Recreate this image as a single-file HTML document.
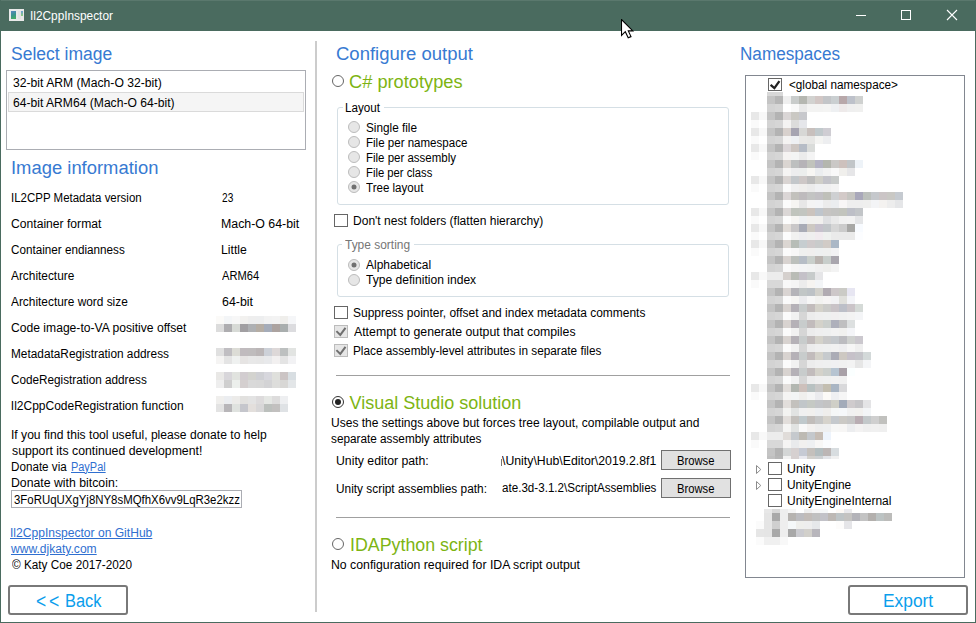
<!DOCTYPE html>
<html><head><meta charset="utf-8"><style>
html,body{margin:0;padding:0;}
body{width:976px;height:623px;overflow:hidden;position:relative;background:#fff;font-family:"Liberation Sans", sans-serif;}
.t{position:absolute;white-space:pre;transform-origin:0 0;}
i{position:absolute;display:block;}
</style></head><body>
<div style='position:absolute;left:0px;top:0px;width:976px;height:31px;background:#4a6b5f'></div><div style='position:absolute;left:0px;top:0px;width:976px;height:1px;background:#5a786d'></div><div style='position:absolute;left:0px;top:0px;width:1px;height:623px;background:#4a6b5f'></div><div style='position:absolute;left:975px;top:0px;width:1px;height:623px;background:#4a6b5f'></div><div style='position:absolute;left:0px;top:622px;width:976px;height:1px;background:#4a6b5f'></div><div style='position:absolute;left:9px;top:9px;width:15px;height:12px;background:#e9e9e9;'></div><div style='position:absolute;left:11px;top:11px;width:5px;height:8px;background:linear-gradient(160deg,#5b86c2,#3a948c 50%,#48b05a)'></div><div style='position:absolute;left:18px;top:11px;width:3px;height:8px;background:#e2e2e2'></div><div style='position:absolute;left:21px;top:11px;width:2px;height:5px;background:linear-gradient(#6a9fd8,#8ccf7a)'></div><div style='position:absolute;left:856px;top:15px;width:10px;height:1px;background:#fff'></div><div style='position:absolute;left:901px;top:10px;width:10px;height:10px;border:1px solid #fff;box-sizing:border-box'></div><svg style='position:absolute;left:946px;top:9px' width='12' height='12'><path d='M1 1 L11 11 M11 1 L1 11' stroke='#fff' stroke-width='1.1'/></svg><div style='position:absolute;left:6px;top:70px;width:300px;height:80px;border:1px solid #abadb3;box-sizing:border-box'></div><div style='position:absolute;left:8px;top:92px;width:296px;height:20px;background:#f5f5f5;border:1px solid #dadada;box-sizing:border-box'></div><div style='position:absolute;left:315px;top:41px;width:2px;height:571px;background:#cccccc'></div><div style='position:absolute;left:11px;top:490px;width:231px;height:18px;border:1px solid #abadb3;box-sizing:border-box'></div><div style='position:absolute;left:8px;top:585px;width:120px;height:30px;border:2px solid #797979;border-radius:3px;box-sizing:border-box'></div><div style='position:absolute;left:848px;top:585px;width:120px;height:30px;border:2px solid #797979;border-radius:3px;box-sizing:border-box'></div><svg style='position:absolute;left:331px;top:74px' width='14' height='14'><circle cx='7' cy='7' r='5.5' fill='#fff' stroke='#666' stroke-width='1'/></svg><svg style='position:absolute;left:331px;top:395px' width='14' height='14'><circle cx='7' cy='7' r='5.5' fill='#fff' stroke='#333' stroke-width='1'/><circle cx='7' cy='7' r='3' fill='#222'/></svg><svg style='position:absolute;left:331px;top:537px' width='14' height='14'><circle cx='7' cy='7' r='5.5' fill='#fff' stroke='#666' stroke-width='1'/></svg><svg style='position:absolute;left:347px;top:120px' width='14' height='14'><circle cx='7' cy='7' r='5.5' fill='#e6e6e6' stroke='#bcbcbc' stroke-width='1'/></svg><svg style='position:absolute;left:347px;top:135px' width='14' height='14'><circle cx='7' cy='7' r='5.5' fill='#e6e6e6' stroke='#bcbcbc' stroke-width='1'/></svg><svg style='position:absolute;left:347px;top:150px' width='14' height='14'><circle cx='7' cy='7' r='5.5' fill='#e6e6e6' stroke='#bcbcbc' stroke-width='1'/></svg><svg style='position:absolute;left:347px;top:165px' width='14' height='14'><circle cx='7' cy='7' r='5.5' fill='#e6e6e6' stroke='#bcbcbc' stroke-width='1'/></svg><svg style='position:absolute;left:347px;top:180px' width='14' height='14'><circle cx='7' cy='7' r='5.5' fill='#e6e6e6' stroke='#bcbcbc' stroke-width='1'/><circle cx='7' cy='7' r='2.5' fill='#707070'/></svg><svg style='position:absolute;left:347px;top:257.5px' width='14' height='14'><circle cx='7' cy='7' r='5.5' fill='#e6e6e6' stroke='#bcbcbc' stroke-width='1'/><circle cx='7' cy='7' r='2.5' fill='#707070'/></svg><svg style='position:absolute;left:347px;top:272.5px' width='14' height='14'><circle cx='7' cy='7' r='5.5' fill='#e6e6e6' stroke='#bcbcbc' stroke-width='1'/></svg><div style='position:absolute;left:337px;top:107px;width:392px;height:98px;border:1px solid #d5dfe5;border-radius:3px;box-sizing:border-box'></div><div style='position:absolute;left:342.5px;top:100px;width:41.5px;height:12px;background:#fff'></div><div style='position:absolute;left:337px;top:244px;width:392px;height:53px;border:1px solid #d5dfe5;border-radius:3px;box-sizing:border-box'></div><div style='position:absolute;left:342px;top:238px;width:72px;height:12px;background:#fff'></div><div style='position:absolute;left:334px;top:214px;width:14px;height:13px;border:1px solid #666;box-sizing:border-box;background:#fff'></div><div style='position:absolute;left:334px;top:306px;width:14px;height:13px;border:1px solid #666;box-sizing:border-box;background:#fff'></div><div style='position:absolute;left:334px;top:325px;width:14px;height:13px;border:1px solid #bcbcbc;box-sizing:border-box;background:#e6e6e6'></div><svg style='position:absolute;left:334px;top:325px' width='14' height='13'><path d='M2.4 6.1 L6.3 9.9 L11.5 2.8' fill='none' stroke='#707070' stroke-width='2'/></svg><div style='position:absolute;left:334px;top:344px;width:14px;height:13px;border:1px solid #bcbcbc;box-sizing:border-box;background:#e6e6e6'></div><svg style='position:absolute;left:334px;top:344px' width='14' height='13'><path d='M2.4 6.1 L6.3 9.9 L11.5 2.8' fill='none' stroke='#707070' stroke-width='2'/></svg><div style='position:absolute;left:336px;top:375px;width:394px;height:1px;background:#a0a0a0'></div><div style='position:absolute;left:336px;top:517px;width:394px;height:1px;background:#a0a0a0'></div><div style='position:absolute;left:661px;top:450px;width:70px;height:20px;background:#e1e1e1;border:1px solid #707070;box-sizing:border-box'></div><div style='position:absolute;left:661px;top:478px;width:70px;height:20px;background:#e1e1e1;border:1px solid #707070;box-sizing:border-box'></div><div style='position:absolute;left:501px;top:459px;width:1.4px;height:6.5px;background:#777'></div><div style='position:absolute;left:745px;top:75px;width:220px;height:503px;border:1px solid #828790;box-sizing:border-box'></div><div style='position:absolute;left:768px;top:78px;width:14px;height:13px;border:1px solid #666;box-sizing:border-box;background:#fff'></div><svg style='position:absolute;left:768px;top:78px' width='14' height='13'><path d='M2.6 6.9 L6.4 10.1 L11.4 3.2' fill='none' stroke='#222' stroke-width='2.3'/></svg><div style='position:absolute;left:768px;top:462px;width:14px;height:13px;border:1px solid #666;box-sizing:border-box;background:#fff'></div><div style='position:absolute;left:768px;top:478px;width:14px;height:13px;border:1px solid #666;box-sizing:border-box;background:#fff'></div><div style='position:absolute;left:768px;top:494px;width:14px;height:13px;border:1px solid #666;box-sizing:border-box;background:#fff'></div><svg style='position:absolute;left:755px;top:465px' width='8' height='10'><path d='M1.5 0.5 L1.5 8.5 L5.8 4.5 Z' fill='#fff' stroke='#8c8c8c' stroke-width='1'/></svg><svg style='position:absolute;left:755px;top:481px' width='8' height='10'><path d='M1.5 0.5 L1.5 8.5 L5.8 4.5 Z' fill='#fff' stroke='#8c8c8c' stroke-width='1'/></svg><svg style='position:absolute;left:621px;top:19px' width='14' height='21'><path d='M0.5 0.5 L0.5 16.5 L4.3 12.7 L7.2 18.8 L10 17.6 L7.3 11.9 L11.8 11.9 Z' fill='#fff' stroke='#000' stroke-width='1.1'/></svg>
<i style='left:216px;top:316px;width:8px;height:8px;background:#fbfaf8'></i><i style='left:224px;top:316px;width:8px;height:8px;background:#f3f5f7'></i><i style='left:232px;top:316px;width:8px;height:8px;background:#f7f7f7'></i><i style='left:240px;top:316px;width:8px;height:8px;background:#f2f1ef'></i><i style='left:248px;top:316px;width:8px;height:8px;background:#eeeeee'></i><i style='left:256px;top:316px;width:8px;height:8px;background:#edeeef'></i><i style='left:264px;top:316px;width:8px;height:8px;background:#f2f2f2'></i><i style='left:272px;top:316px;width:8px;height:8px;background:#f3f3f3'></i><i style='left:280px;top:316px;width:8px;height:8px;background:#efeeeb'></i><i style='left:288px;top:316px;width:8px;height:8px;background:#f5f6f8'></i><i style='left:216px;top:324px;width:8px;height:8px;background:#dcdcdc'></i><i style='left:224px;top:324px;width:8px;height:8px;background:#aeadb0'></i><i style='left:232px;top:324px;width:8px;height:8px;background:#d7dad6'></i><i style='left:240px;top:324px;width:8px;height:8px;background:#a19fa2'></i><i style='left:248px;top:324px;width:8px;height:8px;background:#aeb0b3'></i><i style='left:256px;top:324px;width:8px;height:8px;background:#b5ada4'></i><i style='left:264px;top:324px;width:8px;height:8px;background:#a5acb9'></i><i style='left:272px;top:324px;width:8px;height:8px;background:#aca3a0'></i><i style='left:280px;top:324px;width:8px;height:8px;background:#a9aeae'></i><i style='left:288px;top:324px;width:8px;height:8px;background:#dcdcdf'></i><i style='left:216px;top:348px;width:8px;height:8px;background:#e0e0e0'></i><i style='left:224px;top:348px;width:8px;height:8px;background:#c0bec2'></i><i style='left:232px;top:348px;width:8px;height:8px;background:#dcdcd6'></i><i style='left:240px;top:348px;width:8px;height:8px;background:#c0bbbe'></i><i style='left:248px;top:348px;width:8px;height:8px;background:#bfbcbd'></i><i style='left:256px;top:348px;width:8px;height:8px;background:#bbb6b7'></i><i style='left:264px;top:348px;width:8px;height:8px;background:#cdd1d8'></i><i style='left:272px;top:348px;width:8px;height:8px;background:#ddd8d8'></i><i style='left:280px;top:348px;width:8px;height:8px;background:#bdc0c0'></i><i style='left:288px;top:348px;width:8px;height:8px;background:#e2e4e2'></i><i style='left:216px;top:356px;width:8px;height:8px;background:#f5f4f3'></i><i style='left:224px;top:356px;width:8px;height:8px;background:#e4e4e4'></i><i style='left:232px;top:356px;width:8px;height:8px;background:#eff1f0'></i><i style='left:240px;top:356px;width:8px;height:8px;background:#e6e4e3'></i><i style='left:248px;top:356px;width:8px;height:8px;background:#e8e8e8'></i><i style='left:256px;top:356px;width:8px;height:8px;background:#e7e7e7'></i><i style='left:264px;top:356px;width:8px;height:8px;background:#e8e9eb'></i><i style='left:272px;top:356px;width:8px;height:8px;background:#f2f0f0'></i><i style='left:280px;top:356px;width:8px;height:8px;background:#e4e4e4'></i><i style='left:288px;top:356px;width:8px;height:8px;background:#f2f2f4'></i><i style='left:216px;top:372px;width:8px;height:8px;background:#e9e8e6'></i><i style='left:224px;top:372px;width:8px;height:8px;background:#d8d6da'></i><i style='left:232px;top:372px;width:8px;height:8px;background:#e1e3df'></i><i style='left:240px;top:372px;width:8px;height:8px;background:#d2cdd0'></i><i style='left:248px;top:372px;width:8px;height:8px;background:#d3d3cf'></i><i style='left:256px;top:372px;width:8px;height:8px;background:#cfd0d4'></i><i style='left:264px;top:372px;width:8px;height:8px;background:#d7d7dd'></i><i style='left:272px;top:372px;width:8px;height:8px;background:#dfe0dc'></i><i style='left:280px;top:372px;width:8px;height:8px;background:#cbc4c4'></i><i style='left:288px;top:372px;width:8px;height:8px;background:#d8dee2'></i><i style='left:216px;top:380px;width:8px;height:8px;background:#eeeeee'></i><i style='left:224px;top:380px;width:8px;height:8px;background:#cfcfcf'></i><i style='left:232px;top:380px;width:8px;height:8px;background:#ecefec'></i><i style='left:240px;top:380px;width:8px;height:8px;background:#d4cfcf'></i><i style='left:248px;top:380px;width:8px;height:8px;background:#d9d9d9'></i><i style='left:256px;top:380px;width:8px;height:8px;background:#d8d8d8'></i><i style='left:264px;top:380px;width:8px;height:8px;background:#d3d3d5'></i><i style='left:272px;top:380px;width:8px;height:8px;background:#dddddb'></i><i style='left:280px;top:380px;width:8px;height:8px;background:#d8d7d5'></i><i style='left:288px;top:380px;width:8px;height:8px;background:#e3e6e8'></i><i style='left:216px;top:396px;width:8px;height:8px;background:#f0efed'></i><i style='left:224px;top:396px;width:8px;height:8px;background:#ebedf0'></i><i style='left:232px;top:396px;width:8px;height:8px;background:#ecebe9'></i><i style='left:240px;top:396px;width:8px;height:8px;background:#e2e1df'></i><i style='left:248px;top:396px;width:8px;height:8px;background:#e3e3e3'></i><i style='left:256px;top:396px;width:8px;height:8px;background:#dddbdc'></i><i style='left:264px;top:396px;width:8px;height:8px;background:#e5e7e4'></i><i style='left:272px;top:396px;width:8px;height:8px;background:#dddcdc'></i><i style='left:280px;top:396px;width:8px;height:8px;background:#eeeff1'></i><i style='left:216px;top:404px;width:8px;height:8px;background:#e3e3e3'></i><i style='left:224px;top:404px;width:8px;height:8px;background:#b8b6b9'></i><i style='left:232px;top:404px;width:8px;height:8px;background:#dfe2df'></i><i style='left:240px;top:404px;width:8px;height:8px;background:#c5c6cc'></i><i style='left:248px;top:404px;width:8px;height:8px;background:#e3dfdc'></i><i style='left:256px;top:404px;width:8px;height:8px;background:#d8d7d8'></i><i style='left:264px;top:404px;width:8px;height:8px;background:#bcc0bd'></i><i style='left:272px;top:404px;width:8px;height:8px;background:#c2c0bf'></i><i style='left:280px;top:404px;width:8px;height:8px;background:#dfe2e5'></i><i style='left:767px;top:92px;width:16px;height:4px;background:#d8d8d8'></i><i style='left:767px;top:96px;width:8px;height:8px;background:#c4c4c4'></i><i style='left:767px;top:104px;width:8px;height:8px;background:#d3d3d3'></i><i style='left:775px;top:96px;width:8px;height:8px;background:#b6b6b6'></i><i style='left:775px;top:104px;width:8px;height:8px;background:#d6d6d6'></i><i style='left:783px;top:96px;width:8px;height:8px;background:#efefef'></i><i style='left:783px;top:104px;width:8px;height:8px;background:#ffffff'></i><i style='left:791px;top:96px;width:8px;height:8px;background:#c9cccb'></i><i style='left:791px;top:104px;width:8px;height:8px;background:#f9f9f9'></i><i style='left:799px;top:96px;width:8px;height:8px;background:#b5b7b1'></i><i style='left:799px;top:104px;width:8px;height:8px;background:#e9e9e9'></i><i style='left:807px;top:96px;width:8px;height:8px;background:#d2d2d0'></i><i style='left:807px;top:104px;width:8px;height:8px;background:#f3f3f2'></i><i style='left:815px;top:96px;width:8px;height:8px;background:#d2c7c5'></i><i style='left:815px;top:104px;width:8px;height:8px;background:#f3f3f2'></i><i style='left:823px;top:96px;width:8px;height:8px;background:#c3c5c8'></i><i style='left:823px;top:104px;width:8px;height:8px;background:#f4f4f3'></i><i style='left:831px;top:96px;width:8px;height:8px;background:#cacfd1'></i><i style='left:831px;top:104px;width:8px;height:8px;background:#eef0f2'></i><i style='left:839px;top:96px;width:8px;height:8px;background:#b8a8aa'></i><i style='left:839px;top:104px;width:8px;height:8px;background:#eeeaea'></i><i style='left:847px;top:96px;width:8px;height:8px;background:#bdc1ca'></i><i style='left:847px;top:104px;width:8px;height:8px;background:#efefef'></i><i style='left:855px;top:96px;width:8px;height:8px;background:#cfd1d0'></i><i style='left:855px;top:104px;width:8px;height:8px;background:#f0f0ef'></i><i style='left:751px;top:112px;width:8px;height:8px;background:#e8e8e8'></i><i style='left:759px;top:112px;width:8px;height:8px;background:#f8f8f8'></i><i style='left:751px;top:120px;width:8px;height:8px;background:#fafafa'></i><i style='left:767px;top:112px;width:8px;height:8px;background:#c4c4c4'></i><i style='left:767px;top:120px;width:8px;height:8px;background:#d3d3d3'></i><i style='left:775px;top:112px;width:8px;height:8px;background:#b3b3b3'></i><i style='left:775px;top:120px;width:8px;height:8px;background:#d6d6d6'></i><i style='left:783px;top:112px;width:8px;height:8px;background:#dad6d6'></i><i style='left:783px;top:120px;width:8px;height:8px;background:#f4f3f2'></i><i style='left:791px;top:112px;width:8px;height:8px;background:#cac8c3'></i><i style='left:791px;top:120px;width:8px;height:8px;background:#dcdcdb'></i><i style='left:799px;top:112px;width:8px;height:8px;background:#c7c8cc'></i><i style='left:799px;top:120px;width:8px;height:8px;background:#e5e6ea'></i><i style='left:751px;top:128px;width:8px;height:8px;background:#e8e8e8'></i><i style='left:759px;top:128px;width:8px;height:8px;background:#f8f8f8'></i><i style='left:751px;top:136px;width:8px;height:8px;background:#fafafa'></i><i style='left:767px;top:128px;width:8px;height:8px;background:#c4c4c4'></i><i style='left:767px;top:136px;width:8px;height:8px;background:#d3d3d3'></i><i style='left:775px;top:128px;width:8px;height:8px;background:#b3b3b3'></i><i style='left:775px;top:136px;width:8px;height:8px;background:#d6d6d6'></i><i style='left:783px;top:128px;width:8px;height:8px;background:#d8d1cd'></i><i style='left:783px;top:136px;width:8px;height:8px;background:#f4f3f2'></i><i style='left:791px;top:128px;width:8px;height:8px;background:#a6a4b1'></i><i style='left:791px;top:136px;width:8px;height:8px;background:#eef0f3'></i><i style='left:799px;top:128px;width:8px;height:8px;background:#d7d7d5'></i><i style='left:799px;top:136px;width:8px;height:8px;background:#e9e8e6'></i><i style='left:807px;top:128px;width:8px;height:8px;background:#c8c0bd'></i><i style='left:807px;top:136px;width:8px;height:8px;background:#e7e7e5'></i><i style='left:815px;top:128px;width:8px;height:8px;background:#c1c9cc'></i><i style='left:815px;top:136px;width:8px;height:8px;background:#f4f4f2'></i><i style='left:823px;top:128px;width:8px;height:8px;background:#cfcdd3'></i><i style='left:823px;top:136px;width:8px;height:8px;background:#edeef0'></i><i style='left:751px;top:144px;width:8px;height:8px;background:#e8e8e8'></i><i style='left:759px;top:144px;width:8px;height:8px;background:#f8f8f8'></i><i style='left:751px;top:152px;width:8px;height:8px;background:#fafafa'></i><i style='left:767px;top:144px;width:8px;height:8px;background:#c4c4c4'></i><i style='left:767px;top:152px;width:8px;height:8px;background:#d3d3d3'></i><i style='left:775px;top:144px;width:8px;height:8px;background:#b3b3b3'></i><i style='left:775px;top:152px;width:8px;height:8px;background:#d6d6d6'></i><i style='left:783px;top:144px;width:8px;height:8px;background:#dbd6d8'></i><i style='left:783px;top:152px;width:8px;height:8px;background:#f5f3f2'></i><i style='left:791px;top:144px;width:8px;height:8px;background:#cdc6c2'></i><i style='left:791px;top:152px;width:8px;height:8px;background:#f3f4f4'></i><i style='left:799px;top:144px;width:8px;height:8px;background:#b6bcc6'></i><i style='left:799px;top:152px;width:8px;height:8px;background:#ebebeb'></i><i style='left:807px;top:144px;width:8px;height:8px;background:#dadcda'></i><i style='left:807px;top:152px;width:8px;height:8px;background:#f4f4f4'></i><i style='left:767px;top:160px;width:8px;height:8px;background:#c4c4c4'></i><i style='left:767px;top:168px;width:8px;height:8px;background:#d3d3d3'></i><i style='left:775px;top:160px;width:8px;height:8px;background:#b3b3b3'></i><i style='left:775px;top:168px;width:8px;height:8px;background:#d6d6d6'></i><i style='left:783px;top:160px;width:8px;height:8px;background:#dad5d1'></i><i style='left:783px;top:168px;width:8px;height:8px;background:#f5f4f3'></i><i style='left:791px;top:160px;width:8px;height:8px;background:#bdbfbf'></i><i style='left:791px;top:168px;width:8px;height:8px;background:#ededee'></i><i style='left:799px;top:160px;width:8px;height:8px;background:#b6b3b7'></i><i style='left:799px;top:168px;width:8px;height:8px;background:#eceeed'></i><i style='left:807px;top:160px;width:8px;height:8px;background:#c1c3bc'></i><i style='left:807px;top:168px;width:8px;height:8px;background:#f7f6f3'></i><i style='left:815px;top:160px;width:8px;height:8px;background:#b4b3c3'></i><i style='left:815px;top:168px;width:8px;height:8px;background:#ebedef'></i><i style='left:823px;top:160px;width:8px;height:8px;background:#b4b6ae'></i><i style='left:823px;top:168px;width:8px;height:8px;background:#f2f2f2'></i><i style='left:831px;top:160px;width:8px;height:8px;background:#cac8c6'></i><i style='left:831px;top:168px;width:8px;height:8px;background:#f9f9f9'></i><i style='left:839px;top:160px;width:8px;height:8px;background:#cdc1bd'></i><i style='left:839px;top:168px;width:8px;height:8px;background:#f0efec'></i><i style='left:847px;top:160px;width:8px;height:8px;background:#c1c5c8'></i><i style='left:847px;top:168px;width:8px;height:8px;background:#e6e6e8'></i><i style='left:855px;top:160px;width:8px;height:8px;background:#eef3f8'></i><i style='left:855px;top:168px;width:8px;height:8px;background:#ffffff'></i><i style='left:751px;top:176px;width:8px;height:8px;background:#e8e8e8'></i><i style='left:759px;top:176px;width:8px;height:8px;background:#f8f8f8'></i><i style='left:751px;top:184px;width:8px;height:8px;background:#fafafa'></i><i style='left:767px;top:176px;width:8px;height:8px;background:#c4c4c4'></i><i style='left:767px;top:184px;width:8px;height:8px;background:#d3d3d3'></i><i style='left:775px;top:176px;width:8px;height:8px;background:#b3b3b3'></i><i style='left:775px;top:184px;width:8px;height:8px;background:#d6d6d6'></i><i style='left:783px;top:176px;width:8px;height:8px;background:#d9d4d2'></i><i style='left:783px;top:184px;width:8px;height:8px;background:#fafafa'></i><i style='left:791px;top:176px;width:8px;height:8px;background:#c3c7ca'></i><i style='left:791px;top:184px;width:8px;height:8px;background:#f0f0f0'></i><i style='left:799px;top:176px;width:8px;height:8px;background:#cdc7c6'></i><i style='left:799px;top:184px;width:8px;height:8px;background:#efeeec'></i><i style='left:807px;top:176px;width:8px;height:8px;background:#bdbdbd'></i><i style='left:807px;top:184px;width:8px;height:8px;background:#ebebeb'></i><i style='left:815px;top:176px;width:8px;height:8px;background:#cfcec8'></i><i style='left:815px;top:184px;width:8px;height:8px;background:#eff0f2'></i><i style='left:823px;top:176px;width:8px;height:8px;background:#c3c3c9'></i><i style='left:823px;top:184px;width:8px;height:8px;background:#f0f0f0'></i><i style='left:831px;top:176px;width:8px;height:8px;background:#c8cbca'></i><i style='left:831px;top:184px;width:8px;height:8px;background:#f3f3f3'></i><i style='left:767px;top:192px;width:8px;height:8px;background:#c4c4c4'></i><i style='left:767px;top:200px;width:8px;height:8px;background:#d3d3d3'></i><i style='left:775px;top:192px;width:8px;height:8px;background:#b3b3b3'></i><i style='left:775px;top:200px;width:8px;height:8px;background:#d6d6d6'></i><i style='left:783px;top:192px;width:8px;height:8px;background:#dbd6d6'></i><i style='left:783px;top:200px;width:8px;height:8px;background:#fbfbfb'></i><i style='left:791px;top:192px;width:8px;height:8px;background:#c2c1bc'></i><i style='left:791px;top:200px;width:8px;height:8px;background:#f6f5f2'></i><i style='left:799px;top:192px;width:8px;height:8px;background:#bebbbd'></i><i style='left:799px;top:200px;width:8px;height:8px;background:#e7e7e7'></i><i style='left:807px;top:192px;width:8px;height:8px;background:#c3c4c3'></i><i style='left:807px;top:200px;width:8px;height:8px;background:#f4f4f4'></i><i style='left:815px;top:192px;width:8px;height:8px;background:#c2c0c4'></i><i style='left:815px;top:200px;width:8px;height:8px;background:#f3f4f6'></i><i style='left:823px;top:192px;width:8px;height:8px;background:#bfc0b9'></i><i style='left:823px;top:200px;width:8px;height:8px;background:#ececec'></i><i style='left:831px;top:192px;width:8px;height:8px;background:#ced0d2'></i><i style='left:831px;top:200px;width:8px;height:8px;background:#ebedef'></i><i style='left:839px;top:192px;width:8px;height:8px;background:#d3cac8'></i><i style='left:839px;top:200px;width:8px;height:8px;background:#f8f6f6'></i><i style='left:847px;top:192px;width:8px;height:8px;background:#c6c5c1'></i><i style='left:847px;top:200px;width:8px;height:8px;background:#eeeeee'></i><i style='left:855px;top:192px;width:8px;height:8px;background:#a9a8ba'></i><i style='left:855px;top:200px;width:8px;height:8px;background:#eeeeee'></i><i style='left:863px;top:192px;width:8px;height:8px;background:#bcc0bc'></i><i style='left:863px;top:200px;width:8px;height:8px;background:#efefee'></i><i style='left:871px;top:192px;width:8px;height:8px;background:#c5c8cc'></i><i style='left:871px;top:200px;width:8px;height:8px;background:#f3f4f6'></i><i style='left:879px;top:192px;width:8px;height:8px;background:#cbc5c6'></i><i style='left:879px;top:200px;width:8px;height:8px;background:#f4f2f0'></i><i style='left:887px;top:192px;width:8px;height:8px;background:#c9c8c4'></i><i style='left:887px;top:200px;width:8px;height:8px;background:#ededed'></i><i style='left:895px;top:192px;width:8px;height:8px;background:#c5cad0'></i><i style='left:895px;top:200px;width:8px;height:8px;background:#e5e6e8'></i><i style='left:751px;top:208px;width:8px;height:8px;background:#e8e8e8'></i><i style='left:759px;top:208px;width:8px;height:8px;background:#f8f8f8'></i><i style='left:751px;top:216px;width:8px;height:8px;background:#fafafa'></i><i style='left:767px;top:208px;width:8px;height:8px;background:#c4c4c4'></i><i style='left:767px;top:216px;width:8px;height:8px;background:#d3d3d3'></i><i style='left:775px;top:208px;width:8px;height:8px;background:#b3b3b3'></i><i style='left:775px;top:216px;width:8px;height:8px;background:#d6d6d6'></i><i style='left:783px;top:208px;width:8px;height:8px;background:#dbd7d6'></i><i style='left:783px;top:216px;width:8px;height:8px;background:#fcfcfc'></i><i style='left:791px;top:208px;width:8px;height:8px;background:#c0c4bd'></i><i style='left:791px;top:216px;width:8px;height:8px;background:#f6f5f3'></i><i style='left:799px;top:208px;width:8px;height:8px;background:#c2c5c0'></i><i style='left:799px;top:216px;width:8px;height:8px;background:#eef0f2'></i><i style='left:807px;top:208px;width:8px;height:8px;background:#cbc3bd'></i><i style='left:807px;top:216px;width:8px;height:8px;background:#f1f0ee'></i><i style='left:815px;top:208px;width:8px;height:8px;background:#bfc5cc'></i><i style='left:815px;top:216px;width:8px;height:8px;background:#f1f0ee'></i><i style='left:823px;top:208px;width:8px;height:8px;background:#c6c4c2'></i><i style='left:823px;top:216px;width:8px;height:8px;background:#dfe0e2'></i><i style='left:831px;top:208px;width:8px;height:8px;background:#c3c3c1'></i><i style='left:831px;top:216px;width:8px;height:8px;background:#e9e9e9'></i><i style='left:839px;top:208px;width:8px;height:8px;background:#c2c4bd'></i><i style='left:839px;top:216px;width:8px;height:8px;background:#f1f1f1'></i><i style='left:847px;top:208px;width:8px;height:8px;background:#bdbfc7'></i><i style='left:847px;top:216px;width:8px;height:8px;background:#f2f2f2'></i><i style='left:855px;top:208px;width:8px;height:8px;background:#c2c5c8'></i><i style='left:855px;top:216px;width:8px;height:8px;background:#e4e5e7'></i><i style='left:751px;top:224px;width:8px;height:8px;background:#e8e8e8'></i><i style='left:759px;top:224px;width:8px;height:8px;background:#f8f8f8'></i><i style='left:751px;top:232px;width:8px;height:8px;background:#fafafa'></i><i style='left:767px;top:224px;width:8px;height:8px;background:#c4c4c4'></i><i style='left:767px;top:232px;width:8px;height:8px;background:#d3d3d3'></i><i style='left:775px;top:224px;width:8px;height:8px;background:#b3b3b3'></i><i style='left:775px;top:232px;width:8px;height:8px;background:#d6d6d6'></i><i style='left:783px;top:224px;width:8px;height:8px;background:#e1dcd8'></i><i style='left:783px;top:232px;width:8px;height:8px;background:#fcfcfc'></i><i style='left:791px;top:224px;width:8px;height:8px;background:#c9c7c8'></i><i style='left:791px;top:232px;width:8px;height:8px;background:#f1f1f0'></i><i style='left:799px;top:224px;width:8px;height:8px;background:#a8abb6'></i><i style='left:799px;top:232px;width:8px;height:8px;background:#ededf0'></i><i style='left:807px;top:224px;width:8px;height:8px;background:#cdc8c2'></i><i style='left:807px;top:232px;width:8px;height:8px;background:#efefef'></i><i style='left:815px;top:224px;width:8px;height:8px;background:#c6c1cc'></i><i style='left:815px;top:232px;width:8px;height:8px;background:#f1ebef'></i><i style='left:823px;top:224px;width:8px;height:8px;background:#c2c6c9'></i><i style='left:823px;top:232px;width:8px;height:8px;background:#eff1ef'></i><i style='left:831px;top:224px;width:8px;height:8px;background:#d6d6d6'></i><i style='left:831px;top:232px;width:8px;height:8px;background:#eaeaea'></i><i style='left:839px;top:224px;width:8px;height:8px;background:#cbcbcb'></i><i style='left:839px;top:232px;width:8px;height:8px;background:#eaeaea'></i><i style='left:847px;top:224px;width:8px;height:8px;background:#a8a8a6'></i><i style='left:847px;top:232px;width:8px;height:8px;background:#eaeaea'></i><i style='left:855px;top:224px;width:8px;height:8px;background:#f8fbff'></i><i style='left:855px;top:232px;width:8px;height:8px;background:#fcfdff'></i><i style='left:751px;top:240px;width:8px;height:8px;background:#e8e8e8'></i><i style='left:759px;top:240px;width:8px;height:8px;background:#f8f8f8'></i><i style='left:751px;top:248px;width:8px;height:8px;background:#fafafa'></i><i style='left:767px;top:240px;width:8px;height:8px;background:#c4c4c4'></i><i style='left:767px;top:248px;width:8px;height:8px;background:#d3d3d3'></i><i style='left:775px;top:240px;width:8px;height:8px;background:#b3b3b3'></i><i style='left:775px;top:248px;width:8px;height:8px;background:#d6d6d6'></i><i style='left:783px;top:240px;width:8px;height:8px;background:#dbd6d2'></i><i style='left:783px;top:248px;width:8px;height:8px;background:#fbfbfb'></i><i style='left:791px;top:240px;width:8px;height:8px;background:#b7bdb7'></i><i style='left:791px;top:248px;width:8px;height:8px;background:#f7f7f7'></i><i style='left:799px;top:240px;width:8px;height:8px;background:#c6cdd0'></i><i style='left:799px;top:248px;width:8px;height:8px;background:#eff0ef'></i><i style='left:807px;top:240px;width:8px;height:8px;background:#cfcacb'></i><i style='left:807px;top:248px;width:8px;height:8px;background:#f0efee'></i><i style='left:815px;top:240px;width:8px;height:8px;background:#c9cbcb'></i><i style='left:815px;top:248px;width:8px;height:8px;background:#eef0f0'></i><i style='left:823px;top:240px;width:8px;height:8px;background:#d1cbc6'></i><i style='left:823px;top:248px;width:8px;height:8px;background:#eff0ef'></i><i style='left:831px;top:240px;width:8px;height:8px;background:#aab7c6'></i><i style='left:831px;top:248px;width:8px;height:8px;background:#f2f2f4'></i><i style='left:767px;top:256px;width:8px;height:8px;background:#c4c4c4'></i><i style='left:767px;top:264px;width:8px;height:8px;background:#d3d3d3'></i><i style='left:775px;top:256px;width:8px;height:8px;background:#b3b3b3'></i><i style='left:775px;top:264px;width:8px;height:8px;background:#d6d6d6'></i><i style='left:783px;top:256px;width:8px;height:8px;background:#d8d3d0'></i><i style='left:783px;top:264px;width:8px;height:8px;background:#fafafa'></i><i style='left:791px;top:256px;width:8px;height:8px;background:#bcc0bc'></i><i style='left:791px;top:264px;width:8px;height:8px;background:#f5f5f5'></i><i style='left:799px;top:256px;width:8px;height:8px;background:#b6bdc6'></i><i style='left:799px;top:264px;width:8px;height:8px;background:#f3f4f5'></i><i style='left:807px;top:256px;width:8px;height:8px;background:#c9cfcb'></i><i style='left:807px;top:264px;width:8px;height:8px;background:#f2f3f3'></i><i style='left:815px;top:256px;width:8px;height:8px;background:#bab4b0'></i><i style='left:815px;top:264px;width:8px;height:8px;background:#f0f0f0'></i><i style='left:823px;top:256px;width:8px;height:8px;background:#c8cecb'></i><i style='left:823px;top:264px;width:8px;height:8px;background:#efefed'></i><i style='left:831px;top:256px;width:8px;height:8px;background:#a9a6ae'></i><i style='left:831px;top:264px;width:8px;height:8px;background:#f3f3f3'></i><i style='left:751px;top:272px;width:8px;height:8px;background:#e8e8e8'></i><i style='left:759px;top:272px;width:8px;height:8px;background:#f8f8f8'></i><i style='left:751px;top:280px;width:8px;height:8px;background:#fafafa'></i><i style='left:767px;top:272px;width:8px;height:8px;background:#ececec'></i><i style='left:767px;top:280px;width:8px;height:8px;background:#d8d8d8'></i><i style='left:775px;top:272px;width:8px;height:8px;background:#ececec'></i><i style='left:775px;top:280px;width:8px;height:8px;background:#d8d8d8'></i><i style='left:783px;top:272px;width:8px;height:8px;background:#d5d0cd'></i><i style='left:783px;top:280px;width:8px;height:8px;background:#f8f8f8'></i><i style='left:791px;top:272px;width:8px;height:8px;background:#b9bcb6'></i><i style='left:791px;top:280px;width:8px;height:8px;background:#f5f5f5'></i><i style='left:799px;top:272px;width:8px;height:8px;background:#c4c1c8'></i><i style='left:799px;top:280px;width:8px;height:8px;background:#ececec'></i><i style='left:807px;top:272px;width:8px;height:8px;background:#c7cbcb'></i><i style='left:807px;top:280px;width:8px;height:8px;background:#f6f4f1'></i><i style='left:815px;top:272px;width:8px;height:8px;background:#e6e6e8'></i><i style='left:815px;top:280px;width:8px;height:8px;background:#f3f5f7'></i><i style='left:767px;top:288px;width:8px;height:8px;background:#c4c4c4'></i><i style='left:767px;top:296px;width:8px;height:8px;background:#d3d3d3'></i><i style='left:775px;top:288px;width:8px;height:8px;background:#b3b3b3'></i><i style='left:775px;top:296px;width:8px;height:8px;background:#d6d6d6'></i><i style='left:783px;top:288px;width:8px;height:8px;background:#d9d4d2'></i><i style='left:783px;top:296px;width:8px;height:8px;background:#fafafa'></i><i style='left:791px;top:288px;width:8px;height:8px;background:#b5b4b9'></i><i style='left:791px;top:296px;width:8px;height:8px;background:#f6f5f3'></i><i style='left:799px;top:288px;width:8px;height:8px;background:#c1c6c6'></i><i style='left:799px;top:296px;width:8px;height:8px;background:#ebebee'></i><i style='left:807px;top:288px;width:8px;height:8px;background:#bdc2c6'></i><i style='left:807px;top:296px;width:8px;height:8px;background:#f6f6f6'></i><i style='left:815px;top:288px;width:8px;height:8px;background:#d2d1cb'></i><i style='left:815px;top:296px;width:8px;height:8px;background:#f2f2f0'></i><i style='left:823px;top:288px;width:8px;height:8px;background:#b1abb2'></i><i style='left:823px;top:296px;width:8px;height:8px;background:#f6f4f4'></i><i style='left:831px;top:288px;width:8px;height:8px;background:#cdc7c9'></i><i style='left:831px;top:296px;width:8px;height:8px;background:#f2f2f4'></i><i style='left:839px;top:288px;width:8px;height:8px;background:#cbcbc6'></i><i style='left:839px;top:296px;width:8px;height:8px;background:#e0e0dc'></i><i style='left:847px;top:288px;width:8px;height:8px;background:#e7e6f2'></i><i style='left:847px;top:296px;width:8px;height:8px;background:#f3f4f8'></i><i style='left:767px;top:304px;width:8px;height:8px;background:#c4c4c4'></i><i style='left:767px;top:312px;width:8px;height:8px;background:#d3d3d3'></i><i style='left:775px;top:304px;width:8px;height:8px;background:#b3b3b3'></i><i style='left:775px;top:312px;width:8px;height:8px;background:#d6d6d6'></i><i style='left:783px;top:304px;width:8px;height:8px;background:#d8d3d0'></i><i style='left:783px;top:312px;width:8px;height:8px;background:#fbfbfb'></i><i style='left:791px;top:304px;width:8px;height:8px;background:#b5b1b7'></i><i style='left:791px;top:312px;width:8px;height:8px;background:#f1f1f1'></i><i style='left:799px;top:304px;width:8px;height:8px;background:#c8cccc'></i><i style='left:799px;top:312px;width:8px;height:8px;background:#d6d6d6'></i><i style='left:807px;top:304px;width:8px;height:8px;background:#c2bcbc'></i><i style='left:807px;top:312px;width:8px;height:8px;background:#ececec'></i><i style='left:815px;top:304px;width:8px;height:8px;background:#d4d2ca'></i><i style='left:815px;top:312px;width:8px;height:8px;background:#efefef'></i><i style='left:823px;top:304px;width:8px;height:8px;background:#cbcbc9'></i><i style='left:823px;top:312px;width:8px;height:8px;background:#eff0f0'></i><i style='left:831px;top:304px;width:8px;height:8px;background:#c9c3c7'></i><i style='left:831px;top:312px;width:8px;height:8px;background:#f1eff0'></i><i style='left:839px;top:304px;width:8px;height:8px;background:#bcbfc8'></i><i style='left:839px;top:312px;width:8px;height:8px;background:#f1f1f1'></i><i style='left:847px;top:304px;width:8px;height:8px;background:#cac4c8'></i><i style='left:847px;top:312px;width:8px;height:8px;background:#f3f3f3'></i><i style='left:855px;top:304px;width:8px;height:8px;background:#d5dad7'></i><i style='left:855px;top:312px;width:8px;height:8px;background:#f4f5f7'></i><i style='left:767px;top:320px;width:8px;height:8px;background:#c4c4c4'></i><i style='left:767px;top:328px;width:8px;height:8px;background:#d3d3d3'></i><i style='left:775px;top:320px;width:8px;height:8px;background:#b3b3b3'></i><i style='left:775px;top:328px;width:8px;height:8px;background:#d6d6d6'></i><i style='left:783px;top:320px;width:8px;height:8px;background:#d8d3d0'></i><i style='left:783px;top:328px;width:8px;height:8px;background:#fbfbfb'></i><i style='left:791px;top:320px;width:8px;height:8px;background:#b5b1b7'></i><i style='left:791px;top:328px;width:8px;height:8px;background:#f1f1f1'></i><i style='left:799px;top:320px;width:8px;height:8px;background:#c8cccc'></i><i style='left:799px;top:328px;width:8px;height:8px;background:#d6d6d6'></i><i style='left:807px;top:320px;width:8px;height:8px;background:#c2bcbc'></i><i style='left:807px;top:328px;width:8px;height:8px;background:#ececec'></i><i style='left:815px;top:320px;width:8px;height:8px;background:#d4d2ca'></i><i style='left:815px;top:328px;width:8px;height:8px;background:#efefef'></i><i style='left:823px;top:320px;width:8px;height:8px;background:#cbcfcc'></i><i style='left:823px;top:328px;width:8px;height:8px;background:#eff0f0'></i><i style='left:831px;top:320px;width:8px;height:8px;background:#aeb0bb'></i><i style='left:831px;top:328px;width:8px;height:8px;background:#f2f2f2'></i><i style='left:839px;top:320px;width:8px;height:8px;background:#bfbfc0'></i><i style='left:839px;top:328px;width:8px;height:8px;background:#f1f1ef'></i><i style='left:847px;top:320px;width:8px;height:8px;background:#dde0e0'></i><i style='left:847px;top:328px;width:8px;height:8px;background:#f4f5f8'></i><i style='left:767px;top:336px;width:8px;height:8px;background:#c4c4c4'></i><i style='left:767px;top:344px;width:8px;height:8px;background:#d3d3d3'></i><i style='left:775px;top:336px;width:8px;height:8px;background:#b3b3b3'></i><i style='left:775px;top:344px;width:8px;height:8px;background:#d6d6d6'></i><i style='left:783px;top:336px;width:8px;height:8px;background:#d8d3d0'></i><i style='left:783px;top:344px;width:8px;height:8px;background:#fbfbfb'></i><i style='left:791px;top:336px;width:8px;height:8px;background:#b5b1b7'></i><i style='left:791px;top:344px;width:8px;height:8px;background:#f1f1f1'></i><i style='left:799px;top:336px;width:8px;height:8px;background:#c8cccc'></i><i style='left:799px;top:344px;width:8px;height:8px;background:#d6d6d6'></i><i style='left:807px;top:336px;width:8px;height:8px;background:#c2bcbc'></i><i style='left:807px;top:344px;width:8px;height:8px;background:#ececec'></i><i style='left:815px;top:336px;width:8px;height:8px;background:#d4d2ca'></i><i style='left:815px;top:344px;width:8px;height:8px;background:#efefef'></i><i style='left:823px;top:336px;width:8px;height:8px;background:#c9c9c9'></i><i style='left:823px;top:344px;width:8px;height:8px;background:#eff0f0'></i><i style='left:831px;top:336px;width:8px;height:8px;background:#c4c8cc'></i><i style='left:831px;top:344px;width:8px;height:8px;background:#f1f1f1'></i><i style='left:839px;top:336px;width:8px;height:8px;background:#bcbcc0'></i><i style='left:839px;top:344px;width:8px;height:8px;background:#eeeef0'></i><i style='left:847px;top:336px;width:8px;height:8px;background:#cfd1cf'></i><i style='left:847px;top:344px;width:8px;height:8px;background:#f6f6f6'></i><i style='left:855px;top:336px;width:8px;height:8px;background:#cbc8ce'></i><i style='left:855px;top:344px;width:8px;height:8px;background:#efefef'></i><i style='left:767px;top:352px;width:8px;height:8px;background:#c4c4c4'></i><i style='left:767px;top:360px;width:8px;height:8px;background:#d3d3d3'></i><i style='left:775px;top:352px;width:8px;height:8px;background:#b3b3b3'></i><i style='left:775px;top:360px;width:8px;height:8px;background:#d6d6d6'></i><i style='left:783px;top:352px;width:8px;height:8px;background:#d8d3d0'></i><i style='left:783px;top:360px;width:8px;height:8px;background:#fbfbfb'></i><i style='left:791px;top:352px;width:8px;height:8px;background:#b5b1b7'></i><i style='left:791px;top:360px;width:8px;height:8px;background:#f1f1f1'></i><i style='left:799px;top:352px;width:8px;height:8px;background:#c8cccc'></i><i style='left:799px;top:360px;width:8px;height:8px;background:#d6d6d6'></i><i style='left:807px;top:352px;width:8px;height:8px;background:#c2bcbc'></i><i style='left:807px;top:360px;width:8px;height:8px;background:#ececec'></i><i style='left:815px;top:352px;width:8px;height:8px;background:#d4d2ca'></i><i style='left:815px;top:360px;width:8px;height:8px;background:#efefef'></i><i style='left:823px;top:352px;width:8px;height:8px;background:#c6cacd'></i><i style='left:823px;top:360px;width:8px;height:8px;background:#eff0f0'></i><i style='left:831px;top:352px;width:8px;height:8px;background:#abacb6'></i><i style='left:831px;top:360px;width:8px;height:8px;background:#f0f0f2'></i><i style='left:839px;top:352px;width:8px;height:8px;background:#cdc8c2'></i><i style='left:839px;top:360px;width:8px;height:8px;background:#f1f1f1'></i><i style='left:847px;top:352px;width:8px;height:8px;background:#c6c1c9'></i><i style='left:847px;top:360px;width:8px;height:8px;background:#f3f3f3'></i><i style='left:855px;top:352px;width:8px;height:8px;background:#c5c5ca'></i><i style='left:855px;top:360px;width:8px;height:8px;background:#e6e6e6'></i><i style='left:863px;top:352px;width:8px;height:8px;background:#d3d9d9'></i><i style='left:863px;top:360px;width:8px;height:8px;background:#f4f5f7'></i><i style='left:767px;top:368px;width:8px;height:8px;background:#c4c4c4'></i><i style='left:767px;top:376px;width:8px;height:8px;background:#d3d3d3'></i><i style='left:775px;top:368px;width:8px;height:8px;background:#b3b3b3'></i><i style='left:775px;top:376px;width:8px;height:8px;background:#d6d6d6'></i><i style='left:783px;top:368px;width:8px;height:8px;background:#d8d3d0'></i><i style='left:783px;top:376px;width:8px;height:8px;background:#fbfbfb'></i><i style='left:791px;top:368px;width:8px;height:8px;background:#b5b1b7'></i><i style='left:791px;top:376px;width:8px;height:8px;background:#f1f1f1'></i><i style='left:799px;top:368px;width:8px;height:8px;background:#c8cccc'></i><i style='left:799px;top:376px;width:8px;height:8px;background:#d6d6d6'></i><i style='left:807px;top:368px;width:8px;height:8px;background:#c2bcbc'></i><i style='left:807px;top:376px;width:8px;height:8px;background:#ececec'></i><i style='left:815px;top:368px;width:8px;height:8px;background:#d4d2ca'></i><i style='left:815px;top:376px;width:8px;height:8px;background:#efefef'></i><i style='left:823px;top:368px;width:8px;height:8px;background:#cbcfcc'></i><i style='left:823px;top:376px;width:8px;height:8px;background:#eff0f0'></i><i style='left:831px;top:368px;width:8px;height:8px;background:#b6c4d1'></i><i style='left:831px;top:376px;width:8px;height:8px;background:#f1f1f1'></i><i style='left:839px;top:368px;width:8px;height:8px;background:#a9a1a8'></i><i style='left:839px;top:376px;width:8px;height:8px;background:#f0f0f0'></i><i style='left:847px;top:368px;width:8px;height:8px;background:#fbffff'></i><i style='left:847px;top:376px;width:8px;height:8px;background:#ffffff'></i><i style='left:751px;top:384px;width:8px;height:8px;background:#e8e8e8'></i><i style='left:759px;top:384px;width:8px;height:8px;background:#f8f8f8'></i><i style='left:751px;top:392px;width:8px;height:8px;background:#fafafa'></i><i style='left:767px;top:384px;width:8px;height:8px;background:#c4c4c4'></i><i style='left:767px;top:392px;width:8px;height:8px;background:#d3d3d3'></i><i style='left:775px;top:384px;width:8px;height:8px;background:#b3b3b3'></i><i style='left:775px;top:392px;width:8px;height:8px;background:#d6d6d6'></i><i style='left:783px;top:384px;width:8px;height:8px;background:#e2dedb'></i><i style='left:783px;top:392px;width:8px;height:8px;background:#f5f4f3'></i><i style='left:791px;top:384px;width:8px;height:8px;background:#b3b7b1'></i><i style='left:791px;top:392px;width:8px;height:8px;background:#f3f5f5'></i><i style='left:799px;top:384px;width:8px;height:8px;background:#cdc0bb'></i><i style='left:799px;top:392px;width:8px;height:8px;background:#f0efed'></i><i style='left:807px;top:384px;width:8px;height:8px;background:#b8c1c1'></i><i style='left:807px;top:392px;width:8px;height:8px;background:#f5f5f5'></i><i style='left:815px;top:384px;width:8px;height:8px;background:#c8c7c6'></i><i style='left:815px;top:392px;width:8px;height:8px;background:#ebebee'></i><i style='left:823px;top:384px;width:8px;height:8px;background:#c3beb0'></i><i style='left:823px;top:392px;width:8px;height:8px;background:#fcfaf7'></i><i style='left:831px;top:384px;width:8px;height:8px;background:#a9b5c3'></i><i style='left:831px;top:392px;width:8px;height:8px;background:#eff0f2'></i><i style='left:839px;top:384px;width:8px;height:8px;background:#d9d9db'></i><i style='left:839px;top:392px;width:8px;height:8px;background:#f6f6f6'></i><i style='left:767px;top:400px;width:8px;height:8px;background:#c4c4c4'></i><i style='left:767px;top:408px;width:8px;height:8px;background:#d3d3d3'></i><i style='left:775px;top:400px;width:8px;height:8px;background:#b3b3b3'></i><i style='left:775px;top:408px;width:8px;height:8px;background:#d6d6d6'></i><i style='left:783px;top:400px;width:8px;height:8px;background:#e2dedb'></i><i style='left:783px;top:408px;width:8px;height:8px;background:#f3f3f1'></i><i style='left:791px;top:400px;width:8px;height:8px;background:#c3c1bd'></i><i style='left:791px;top:408px;width:8px;height:8px;background:#e1e3e2'></i><i style='left:799px;top:400px;width:8px;height:8px;background:#c1c6c9'></i><i style='left:799px;top:408px;width:8px;height:8px;background:#f0f0f0'></i><i style='left:807px;top:400px;width:8px;height:8px;background:#c5c9c4'></i><i style='left:807px;top:408px;width:8px;height:8px;background:#f1f0ee'></i><i style='left:815px;top:400px;width:8px;height:8px;background:#c3c5c8'></i><i style='left:815px;top:408px;width:8px;height:8px;background:#edeff1'></i><i style='left:823px;top:400px;width:8px;height:8px;background:#c3c3c3'></i><i style='left:823px;top:408px;width:8px;height:8px;background:#efeeec'></i><i style='left:831px;top:400px;width:8px;height:8px;background:#cfcfc7'></i><i style='left:831px;top:408px;width:8px;height:8px;background:#f5f7f7'></i><i style='left:839px;top:400px;width:8px;height:8px;background:#a3abb9'></i><i style='left:839px;top:408px;width:8px;height:8px;background:#f6f8fa'></i><i style='left:847px;top:400px;width:8px;height:8px;background:#cfcbcd'></i><i style='left:847px;top:408px;width:8px;height:8px;background:#f1f1f1'></i><i style='left:855px;top:400px;width:8px;height:8px;background:#c6c5c8'></i><i style='left:855px;top:408px;width:8px;height:8px;background:#f2f1ef'></i><i style='left:863px;top:400px;width:8px;height:8px;background:#e4e4e6'></i><i style='left:863px;top:408px;width:8px;height:8px;background:#f3f5f7'></i><i style='left:767px;top:416px;width:8px;height:8px;background:#c4c4c4'></i><i style='left:767px;top:424px;width:8px;height:8px;background:#d3d3d3'></i><i style='left:775px;top:416px;width:8px;height:8px;background:#b3b3b3'></i><i style='left:775px;top:424px;width:8px;height:8px;background:#d6d6d6'></i><i style='left:783px;top:416px;width:8px;height:8px;background:#e2dedb'></i><i style='left:783px;top:424px;width:8px;height:8px;background:#f5f5f4'></i><i style='left:791px;top:416px;width:8px;height:8px;background:#c3c0bc'></i><i style='left:791px;top:424px;width:8px;height:8px;background:#e1e3e2'></i><i style='left:799px;top:416px;width:8px;height:8px;background:#c0c9cc'></i><i style='left:799px;top:424px;width:8px;height:8px;background:#f9f9f9'></i><i style='left:807px;top:416px;width:8px;height:8px;background:#c1bdba'></i><i style='left:807px;top:424px;width:8px;height:8px;background:#f3f1ef'></i><i style='left:815px;top:416px;width:8px;height:8px;background:#c6c7c7'></i><i style='left:815px;top:424px;width:8px;height:8px;background:#eeeeee'></i><i style='left:823px;top:416px;width:8px;height:8px;background:#d6d3cc'></i><i style='left:823px;top:424px;width:8px;height:8px;background:#eeeff0'></i><i style='left:831px;top:416px;width:8px;height:8px;background:#c5c9cd'></i><i style='left:831px;top:424px;width:8px;height:8px;background:#f7f7f6'></i><i style='left:839px;top:416px;width:8px;height:8px;background:#cbc9c5'></i><i style='left:839px;top:424px;width:8px;height:8px;background:#f7f6f5'></i><i style='left:847px;top:416px;width:8px;height:8px;background:#c6c6c6'></i><i style='left:847px;top:424px;width:8px;height:8px;background:#ecedef'></i><i style='left:855px;top:416px;width:8px;height:8px;background:#b9adb3'></i><i style='left:855px;top:424px;width:8px;height:8px;background:#f3f2f2'></i><i style='left:863px;top:416px;width:8px;height:8px;background:#c3c8ca'></i><i style='left:863px;top:424px;width:8px;height:8px;background:#efefef'></i><i style='left:871px;top:416px;width:8px;height:8px;background:#cfcfcf'></i><i style='left:871px;top:424px;width:8px;height:8px;background:#f0f0f0'></i><i style='left:879px;top:416px;width:8px;height:8px;background:#c1c1be'></i><i style='left:879px;top:424px;width:8px;height:8px;background:#efefef'></i><i style='left:751px;top:432px;width:8px;height:8px;background:#e8e8e8'></i><i style='left:759px;top:432px;width:8px;height:8px;background:#f8f8f8'></i><i style='left:751px;top:440px;width:8px;height:8px;background:#fafafa'></i><i style='left:767px;top:432px;width:8px;height:8px;background:#ececec'></i><i style='left:767px;top:440px;width:8px;height:8px;background:#d8d8d8'></i><i style='left:775px;top:432px;width:8px;height:8px;background:#ececec'></i><i style='left:775px;top:440px;width:8px;height:8px;background:#d8d8d8'></i><i style='left:783px;top:432px;width:8px;height:8px;background:#e0dcd9'></i><i style='left:783px;top:440px;width:8px;height:8px;background:#f5f4f3'></i><i style='left:791px;top:432px;width:8px;height:8px;background:#c5c9cd'></i><i style='left:791px;top:440px;width:8px;height:8px;background:#e9eaec'></i><i style='left:799px;top:432px;width:8px;height:8px;background:#bdbab3'></i><i style='left:799px;top:440px;width:8px;height:8px;background:#f1f0ef'></i><i style='left:807px;top:432px;width:8px;height:8px;background:#c4c8cc'></i><i style='left:807px;top:440px;width:8px;height:8px;background:#eef0f2'></i><i style='left:815px;top:432px;width:8px;height:8px;background:#c6bdb5'></i><i style='left:815px;top:440px;width:8px;height:8px;background:#f8f7f6'></i><i style='left:823px;top:432px;width:8px;height:8px;background:#eef4fc'></i><i style='left:823px;top:440px;width:8px;height:8px;background:#fbfcfe'></i><i style='left:767px;top:448px;width:8px;height:8px;background:#c4c4c4'></i><i style='left:767px;top:456px;width:8px;height:3px;background:#c0c0c0'></i><i style='left:775px;top:448px;width:8px;height:8px;background:#b3b3b3'></i><i style='left:775px;top:456px;width:8px;height:3px;background:#b6b6b6'></i><i style='left:783px;top:448px;width:8px;height:8px;background:#d4d6d6'></i><i style='left:783px;top:456px;width:8px;height:3px;background:#f2f2f2'></i><i style='left:791px;top:448px;width:8px;height:8px;background:#d6d0d0'></i><i style='left:791px;top:456px;width:8px;height:3px;background:#d6d0d0'></i><i style='left:799px;top:448px;width:8px;height:8px;background:#c6cad4'></i><i style='left:799px;top:456px;width:8px;height:3px;background:#e8e8ee'></i><i style='left:807px;top:448px;width:8px;height:8px;background:#c4c0bc'></i><i style='left:807px;top:456px;width:8px;height:3px;background:#d2d0cc'></i><i style='left:815px;top:448px;width:8px;height:8px;background:#b3bdbf'></i><i style='left:815px;top:456px;width:8px;height:3px;background:#cdd0d2'></i><i style='left:823px;top:448px;width:8px;height:8px;background:#bcb6b5'></i><i style='left:823px;top:456px;width:8px;height:3px;background:#e2e4e8'></i><i style='left:831px;top:448px;width:8px;height:8px;background:#d8dde0'></i><i style='left:831px;top:456px;width:8px;height:3px;background:#f0f0f0'></i><i style='left:756px;top:509px;width:8px;height:4px;background:#ffffff'></i><i style='left:764px;top:509px;width:8px;height:4px;background:#e8e8e8'></i><i style='left:772px;top:509px;width:8px;height:4px;background:#d8d8d8'></i><i style='left:780px;top:509px;width:8px;height:4px;background:#eeeeee'></i><i style='left:788px;top:509px;width:8px;height:4px;background:#f5f5f5'></i><i style='left:796px;top:509px;width:8px;height:4px;background:#ffffff'></i><i style='left:804px;top:509px;width:8px;height:4px;background:#eeeeee'></i><i style='left:812px;top:509px;width:8px;height:4px;background:#f5f5f5'></i><i style='left:820px;top:509px;width:8px;height:4px;background:#f5f7f8'></i><i style='left:828px;top:509px;width:8px;height:4px;background:#ffffff'></i><i style='left:836px;top:509px;width:8px;height:4px;background:#fdf9f5'></i><i style='left:844px;top:509px;width:8px;height:4px;background:#e9e9ec'></i><i style='left:756px;top:513px;width:8px;height:8px;background:#ffffff'></i><i style='left:764px;top:513px;width:8px;height:8px;background:#e5e5e5'></i><i style='left:772px;top:513px;width:8px;height:8px;background:#a9a9a9'></i><i style='left:780px;top:513px;width:8px;height:8px;background:#eeeeee'></i><i style='left:788px;top:513px;width:8px;height:8px;background:#b6b3b0'></i><i style='left:796px;top:513px;width:8px;height:8px;background:#bcbcc0'></i><i style='left:804px;top:513px;width:8px;height:8px;background:#c2bcb8'></i><i style='left:812px;top:513px;width:8px;height:8px;background:#c0c0c0'></i><i style='left:820px;top:513px;width:8px;height:8px;background:#c2c2c8'></i><i style='left:828px;top:513px;width:8px;height:8px;background:#bdb8b4'></i><i style='left:836px;top:513px;width:8px;height:8px;background:#bec4c6'></i><i style='left:844px;top:513px;width:8px;height:8px;background:#c4c3c1'></i><i style='left:852px;top:513px;width:8px;height:8px;background:#b3b3b9'></i><i style='left:860px;top:513px;width:8px;height:8px;background:#c3c3c3'></i><i style='left:868px;top:513px;width:8px;height:8px;background:#b3b0ad'></i><i style='left:876px;top:513px;width:8px;height:8px;background:#bcc3c3'></i><i style='left:884px;top:513px;width:8px;height:8px;background:#bcbcba'></i><i style='left:756px;top:521px;width:8px;height:8px;background:#fbfbfb'></i><i style='left:764px;top:521px;width:8px;height:8px;background:#e5e5e5'></i><i style='left:772px;top:521px;width:8px;height:8px;background:#cfcfcf'></i><i style='left:780px;top:521px;width:8px;height:8px;background:#eeeeee'></i><i style='left:788px;top:521px;width:8px;height:8px;background:#f5f8f9'></i><i style='left:796px;top:521px;width:8px;height:8px;background:#efefec'></i><i style='left:804px;top:521px;width:8px;height:8px;background:#eeeeee'></i><i style='left:812px;top:521px;width:8px;height:8px;background:#e6e8ea'></i><i style='left:820px;top:521px;width:8px;height:8px;background:#ffffff'></i><i style='left:828px;top:521px;width:8px;height:8px;background:#ffffff'></i><i style='left:836px;top:521px;width:8px;height:8px;background:#fdfcfb'></i><i style='left:844px;top:521px;width:8px;height:8px;background:#e5e5e8'></i><i style='left:756px;top:529px;width:8px;height:8px;background:#e6e6e6'></i><i style='left:764px;top:529px;width:8px;height:8px;background:#e5e5e5'></i><i style='left:772px;top:529px;width:8px;height:8px;background:#a9a9a9'></i><i style='left:780px;top:529px;width:8px;height:8px;background:#eeeeee'></i><i style='left:788px;top:529px;width:8px;height:8px;background:#a8a8a8'></i><i style='left:796px;top:529px;width:8px;height:8px;background:#cbcbd0'></i><i style='left:804px;top:529px;width:8px;height:8px;background:#d2d0cb'></i><i style='left:812px;top:529px;width:8px;height:8px;background:#b8b6bc'></i><i style='left:756px;top:537px;width:8px;height:8px;background:#fbfbfb'></i><i style='left:764px;top:537px;width:8px;height:8px;background:#f0f0f0'></i><i style='left:772px;top:537px;width:8px;height:8px;background:#f0f0f0'></i><i style='left:780px;top:537px;width:8px;height:8px;background:#f8f8f8'></i>
<div class='t' style='left:29.91px;top:9.84px;font-size:12px;line-height:12px;color:#ffffff;transform:scaleX(0.9867);'>Il2CppInspector</div>
<div class='t' style='left:10.78px;top:44.76px;font-size:18px;line-height:18px;color:#377ad2;transform:scaleX(0.9730);'>Select image</div>
<div class='t' style='left:13.00px;top:76.84px;font-size:12px;line-height:12px;color:#000;transform:scaleX(1.0136);'>32-bit ARM (Mach-O 32-bit)</div>
<div class='t' style='left:13.00px;top:96.84px;font-size:12px;line-height:12px;color:#000;transform:scaleX(1.0094);'>64-bit ARM64 (Mach-O 64-bit)</div>
<div class='t' style='left:10.73px;top:158.76px;font-size:18px;line-height:18px;color:#377ad2;transform:scaleX(1.0229);'>Image information</div>
<div class='t' style='left:10.84px;top:191.84px;font-size:12px;line-height:12px;color:#000;transform:scaleX(0.9570);'>IL2CPP Metadata version</div>
<div class='t' style='left:11.25px;top:217.84px;font-size:12px;line-height:12px;color:#000;transform:scaleX(1.0112);'>Container format</div>
<div class='t' style='left:11.25px;top:243.84px;font-size:12px;line-height:12px;color:#000;transform:scaleX(0.9741);'>Container endianness</div>
<div class='t' style='left:11.25px;top:269.84px;font-size:12px;line-height:12px;color:#000;transform:scaleX(0.9883);'>Architecture</div>
<div class='t' style='left:11.25px;top:295.84px;font-size:12px;line-height:12px;color:#000;transform:scaleX(0.9894);'>Architecture word size</div>
<div class='t' style='left:11.25px;top:321.84px;font-size:12px;line-height:12px;color:#000;transform:scaleX(1.0101);'>Code image-to-VA positive offset</div>
<div class='t' style='left:10.81px;top:347.84px;font-size:12px;line-height:12px;color:#000;transform:scaleX(0.9868);'>MetadataRegistration address</div>
<div class='t' style='left:11.25px;top:373.84px;font-size:12px;line-height:12px;color:#000;transform:scaleX(0.9786);'>CodeRegistration address</div>
<div class='t' style='left:10.80px;top:399.84px;font-size:12px;line-height:12px;color:#000;'>Il2CppCodeRegistration function</div>
<div class='t' style='left:222.00px;top:191.84px;font-size:12px;line-height:12px;color:#000;transform:scaleX(0.8462);'>23</div>
<div class='t' style='left:220.97px;top:217.84px;font-size:12px;line-height:12px;color:#000;transform:scaleX(1.0293);'>Mach-O 64-bit</div>
<div class='t' style='left:220.98px;top:243.84px;font-size:12px;line-height:12px;color:#000;transform:scaleX(1.0167);'>Little</div>
<div class='t' style='left:222.00px;top:269.84px;font-size:12px;line-height:12px;color:#000;transform:scaleX(0.9275);'>ARM64</div>
<div class='t' style='left:222.00px;top:295.84px;font-size:12px;line-height:12px;color:#000;transform:scaleX(1.0333);'>64-bit</div>
<div class='t' style='left:10.89px;top:428.84px;font-size:12px;line-height:12px;color:#000;transform:scaleX(1.0083);'>If you find this tool useful, please donate to help</div>
<div class='t' style='left:11.50px;top:444.84px;font-size:12px;line-height:12px;color:#000;transform:scaleX(1.0227);'>support its continued development!</div>
<div class='t' style='left:11.03px;top:460.84px;font-size:12px;line-height:12px;color:#000;transform:scaleX(0.9719);'>Donate via</div>
<div class='t' style='left:70.69px;top:460.84px;font-size:12px;line-height:12px;color:#2f6fd0;transform:scaleX(0.9111);text-decoration:underline'>PayPal</div>
<div class='t' style='left:10.98px;top:476.84px;font-size:12px;line-height:12px;color:#000;transform:scaleX(1.0228);'>Donate with bitcoin:</div>
<div class='t' style='left:13.50px;top:493.84px;font-size:12px;line-height:12px;color:#000;transform:scaleX(0.9515);'>3FoRUqUXgYj8NY8sMQfhX6vv9LqR3e2kzz</div>
<div class='t' style='left:10.19px;top:527.04px;font-size:12px;line-height:12px;color:#2f6fd0;transform:scaleX(1.0064);text-decoration:underline'>Il2CppInspector on GitHub</div>
<div class='t' style='left:11.20px;top:543.04px;font-size:12px;line-height:12px;color:#2f6fd0;transform:scaleX(1.0065);text-decoration:underline'>www.djkaty.com</div>
<div class='t' style='left:11.90px;top:559.04px;font-size:12px;line-height:12px;color:#000;transform:scaleX(0.9811);'>© Katy Coe 2017-2020</div>
<div class='t' style='left:36.17px;top:589.52px;font-size:21px;line-height:21px;color:#0a9eec;transform:scaleX(0.8300);'>&lt;</div>
<div class='t' style='left:48.56px;top:589.52px;font-size:21px;line-height:21px;color:#0a9eec;transform:scaleX(0.8400);'>&lt;</div>
<div class='t' style='left:64.59px;top:591.76px;font-size:18px;line-height:18px;color:#0a9eec;transform:scaleX(0.9103);'>Back</div>
<div class='t' style='left:335.72px;top:44.76px;font-size:18px;line-height:18px;color:#377ad2;transform:scaleX(1.0284);'>Configure output</div>
<div class='t' style='left:348.99px;top:72.76px;font-size:18px;line-height:18px;color:#7db412;transform:scaleX(1.0135);'>C# prototypes</div>
<div class='t' style='left:345.03px;top:101.84px;font-size:12px;line-height:12px;color:#000;transform:scaleX(0.9714);'>Layout</div>
<div class='t' style='left:365.52px;top:121.84px;font-size:12px;line-height:12px;color:#000;transform:scaleX(0.9804);'>Single file</div>
<div class='t' style='left:366.04px;top:136.84px;font-size:12px;line-height:12px;color:#000;transform:scaleX(0.9615);'>File per namespace</div>
<div class='t' style='left:366.04px;top:151.84px;font-size:12px;line-height:12px;color:#000;transform:scaleX(0.9570);'>File per assembly</div>
<div class='t' style='left:366.06px;top:166.84px;font-size:12px;line-height:12px;color:#000;transform:scaleX(0.9384);'>File per class</div>
<div class='t' style='left:366.00px;top:181.84px;font-size:12px;line-height:12px;color:#000;transform:scaleX(0.9625);'>Tree layout</div>
<div class='t' style='left:353.00px;top:214.84px;font-size:12px;line-height:12px;color:#000;transform:scaleX(1.0027);'>Don't nest folders (flatten hierarchy)</div>
<div class='t' style='left:344.80px;top:238.84px;font-size:12px;line-height:12px;color:#767676;transform:scaleX(0.9954);'>Type sorting</div>
<div class='t' style='left:366.00px;top:258.84px;font-size:12px;line-height:12px;color:#000;transform:scaleX(0.9962);'>Alphabetical</div>
<div class='t' style='left:366.00px;top:273.84px;font-size:12px;line-height:12px;color:#000;transform:scaleX(1.0069);'>Type definition index</div>
<div class='t' style='left:353.00px;top:307.34px;font-size:12px;line-height:12px;color:#000;transform:scaleX(0.9969);'>Suppress pointer, offset and index metadata comments</div>
<div class='t' style='left:353.50px;top:325.84px;font-size:12px;line-height:12px;color:#000;transform:scaleX(1.0250);'>Attempt to generate output that compiles</div>
<div class='t' style='left:353.02px;top:344.84px;font-size:12px;line-height:12px;color:#000;transform:scaleX(0.9825);'>Place assembly-level attributes in separate files</div>
<div class='t' style='left:349.60px;top:394.26px;font-size:18px;line-height:18px;color:#7db412;'>Visual Studio solution</div>
<div class='t' style='left:331.00px;top:417.34px;font-size:12px;line-height:12px;color:#000;transform:scaleX(1.0022);'>Uses the settings above but forces tree layout, compilable output and</div>
<div class='t' style='left:331.25px;top:433.04px;font-size:12px;line-height:12px;color:#000;transform:scaleX(0.9804);'>separate assembly attributes</div>
<div class='t' style='left:335.98px;top:454.84px;font-size:12px;line-height:12px;color:#000;transform:scaleX(1.0225);'>Unity editor path:</div>
<div class='t' style='left:336.01px;top:483.04px;font-size:12px;line-height:12px;color:#000;transform:scaleX(0.9884);'>Unity script assemblies path:</div>
<div class='t' style='left:677.06px;top:454.84px;font-size:12px;line-height:12px;color:#000;transform:scaleX(0.9359);'>Browse</div>
<div class='t' style='left:677.06px;top:482.84px;font-size:12px;line-height:12px;color:#000;transform:scaleX(0.9359);'>Browse</div>
<div class='t' style='left:501.50px;top:454.84px;font-size:12px;line-height:12px;color:#000;transform:scaleX(1.0233);'>\Unity\Hub\Editor\2019.2.8f1</div>
<div class='t' style='left:502.00px;top:482.34px;font-size:12px;line-height:12px;color:#000;transform:scaleX(0.9686);'>ate.3d-3.1.2\ScriptAssemblies</div>
<div class='t' style='left:349.51px;top:535.76px;font-size:18px;line-height:18px;color:#7db412;transform:scaleX(0.9887);'>IDAPython script</div>
<div class='t' style='left:330.98px;top:558.84px;font-size:12px;line-height:12px;color:#000;transform:scaleX(1.0226);'>No configuration required for IDA script output</div>
<div class='t' style='left:740.05px;top:44.76px;font-size:18px;line-height:18px;color:#377ad2;transform:scaleX(0.9519);'>Namespaces</div>
<div class='t' style='left:789.00px;top:78.84px;font-size:12px;line-height:12px;color:#000;transform:scaleX(0.9775);'>&lt;global namespace&gt;</div>
<div class='t' style='left:786.57px;top:462.84px;font-size:12px;line-height:12px;color:#000;transform:scaleX(1.0308);'>Unity</div>
<div class='t' style='left:786.61px;top:478.84px;font-size:12px;line-height:12px;color:#000;transform:scaleX(0.9921);'>UnityEngine</div>
<div class='t' style='left:786.60px;top:494.84px;font-size:12px;line-height:12px;color:#000;transform:scaleX(0.9971);'>UnityEngineInternal</div>
<div class='t' style='left:882.84px;top:591.76px;font-size:18px;line-height:18px;color:#0a9eec;transform:scaleX(0.9647);'>Export</div>
</body></html>
